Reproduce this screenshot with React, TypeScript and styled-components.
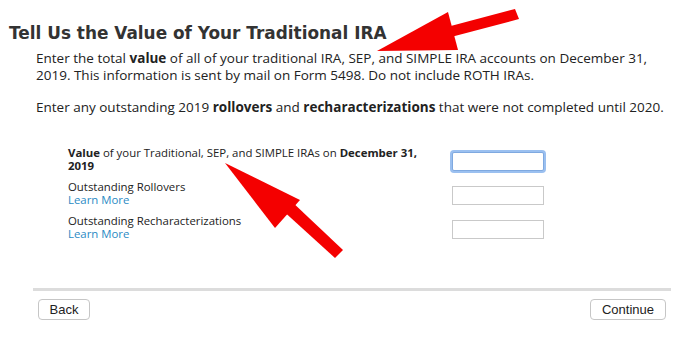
import React from "react";
import styled, { createGlobalStyle } from "styled-components";

const GlobalStyle = createGlobalStyle`
  html, body {
    margin: 0;
    padding: 0;
    background: #ffffff;
  }
  body {
    width: 688px;
    height: 354px;
    overflow: hidden;
    font-family: "DejaVu Sans", "Open Sans", sans-serif;
    color: #222;
  }
`;

const Page = styled.div`
  position: relative;
  width: 688px;
  height: 354px;
  padding-top: 22px;
  box-sizing: border-box;
`;

const Title = styled.h1`
  margin: 0 0 0 9px;
  font-size: 16.9px;
  line-height: 22px;
  font-weight: bold;
  color: #333;
`;

const Intro = styled.div`
  width: 636px;
  padding: 6px 0 0 36px;
`;

const Para = styled.p`
  margin: 0 0 15px;
  font-family: "Open Sans", sans-serif;
  font-size: 13.5px;
  line-height: 17px;
  color: #222;
`;

const Form = styled.div`
  display: grid;
  grid-template-columns: 360px 93px;
  column-gap: 24px;
  row-gap: 8px;
  padding: 15px 0 0 68px;
`;

const Label = styled.div`
  font-family: "Open Sans", sans-serif;
  font-size: 11.4px;
  line-height: 13px;
  color: #222;
`;

const LearnMore = styled.a`
  display: block;
  color: #2a8ac4;
  text-decoration: none;
  cursor: pointer;
`;

const Input = styled.input<{ $focused?: boolean }>`
  box-sizing: border-box;
  width: 92px;
  height: 19px;
  margin-top: 6px;
  border: 1px solid ${(p) => (p.$focused ? "#7fa9e0" : "#c9c9c9")};
  outline: none;
  box-shadow: ${(p) => (p.$focused ? "0 0 0 2px #9bc0f0" : "none")};
  border-radius: ${(p) => (p.$focused ? "2px" : "0")};
  padding: 0 3px;
  font-size: 12px;
`;

const Footer = styled.div`
  margin: 48px 17px 0 33px;
  border-top: 3px solid #dcdcdc;
  padding: 8px 5px 0;
  display: flex;
  justify-content: space-between;
`;

const Button = styled.button<{ $width: number }>`
  width: ${(p) => p.$width}px;
  height: 21px;
  background: #fff;
  border: 1px solid #c6c6c6;
  border-radius: 4px;
  font-family: "Liberation Sans", Arial, sans-serif;
  font-size: 13px;
  color: #222;
  padding: 0;
  cursor: pointer;
`;

const Overlay = styled.svg`
  position: absolute;
  left: 0;
  top: 0;
  pointer-events: none;
`;

export default function App() {
  return (
    <Page>
      <GlobalStyle />
      <Title>Tell Us the Value of Your Traditional IRA</Title>
      <Intro>
        <Para>
          Enter the total <b>value</b> of all of your traditional IRA, SEP, and SIMPLE IRA accounts on
          December 31, 2019. This information is sent by mail on Form 5498. Do not include ROTH IRAs.
        </Para>
        <Para>
          Enter any outstanding 2019 <b>rollovers</b> and <b>recharacterizations</b> that were not
          completed until 2020.
        </Para>
      </Intro>
      <Form>
        <Label>
          <b>Value</b> of your Traditional, SEP, and SIMPLE IRAs on <b>December 31, 2019</b>
        </Label>
        <Input $focused />
        <Label>
          Outstanding Rollovers
          <LearnMore>Learn More</LearnMore>
        </Label>
        <Input />
        <Label>
          Outstanding Recharacterizations
          <LearnMore>Learn More</LearnMore>
        </Label>
        <Input />
      </Form>
      <Footer>
        <Button $width={52}>Back</Button>
        <Button $width={76}>Continue</Button>
      </Footer>
      <Overlay width="688" height="354" viewBox="0 0 688 354">
        <polygon points="377,51 448,12 458,50" fill="#f40000" />
        <polygon points="447,27 515,9 519,19 451,37" fill="#f40000" />
        <polygon points="225,163 300,200 275,228" fill="#f40000" />
        <polygon points="280,208 290,200 343,250 335,258" fill="#f40000" />
      </Overlay>
    </Page>
  );
}
